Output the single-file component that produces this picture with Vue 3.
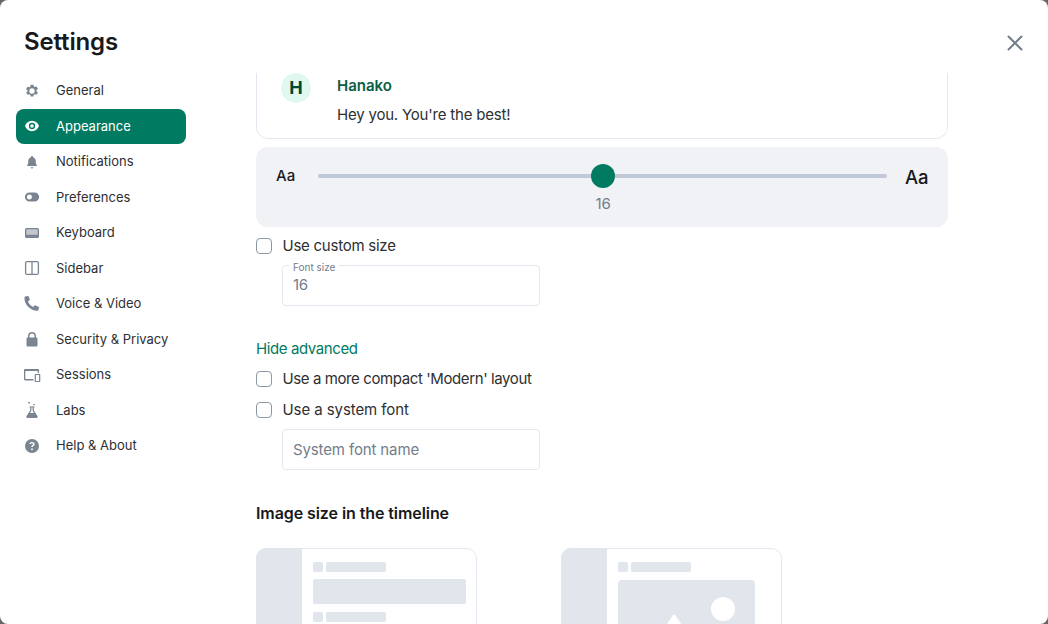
<script setup>
const nav = [
  { label: 'General', icon: 'gear' },
  { label: 'Appearance', icon: 'eye', active: true },
  { label: 'Notifications', icon: 'bell' },
  { label: 'Preferences', icon: 'toggle' },
  { label: 'Keyboard', icon: 'keyboard' },
  { label: 'Sidebar', icon: 'sidebar' },
  { label: 'Voice & Video', icon: 'phone' },
  { label: 'Security & Privacy', icon: 'lock' },
  { label: 'Sessions', icon: 'devices' },
  { label: 'Labs', icon: 'flask' },
  { label: 'Help & About', icon: 'help' },
]
</script>

<template>
  <div class="dialog">
    <header class="head">
      <h1>Settings</h1>
      <svg class="close" width="24" height="24" viewBox="0 0 24 24"><path d="M5.5 5.5l13 13M18.500 5.500l-13 13" fill="none" stroke="currentColor" stroke-width="2" stroke-linecap="round"/></svg>
    </header>
    <div class="body">
      <nav class="nav">
        <div v-for="n in nav" :key="n.label" class="item" :class="{ active: n.active }">
          <svg class="ico" width="18" height="18" viewBox="0 0 18 18" fill="currentColor">
            <template v-if="n.icon === 'gear'">
              <path transform="translate(9 9) scale(.86) translate(-9 -9)" fill-rule="evenodd" d="M7.400 1.600h3.200l.4 2 1.300.75 1.950-.65 1.600 2.750-1.550 1.350v1.500l1.550 1.350-1.600 2.750-1.950-.65-1.300.75-.4 2H7.400l-.4-2-1.300-.75-1.950.65-1.600-2.750 1.550-1.350V8.200L2.150 6.850l1.600-2.750 1.950.65L7 4zM9 5.900a3.100 3.100 0 1 0 0 6.200 3.100 3.100 0 0 0 0-6.200z"/>
            </template>
            <template v-else-if="n.icon === 'eye'">
              <path transform="translate(9 9) scale(.92) translate(-9 -9)" fill-rule="evenodd" d="M9 3.400c3.600 0 6.400 2.400 7.600 5.600-1.200 3.200-4 5.600-7.600 5.600S2.600 12.200 1.400 9C2.600 5.800 5.400 3.400 9 3.400zm0 2.200a3.400 3.400 0 1 0 0 6.800 3.400 3.400 0 0 0 0-6.800zm0 1.500a1.900 1.900 0 1 1 0 3.800 1.900 1.900 0 0 1 0-3.800z"/>
            </template>
            <template v-else-if="n.icon === 'bell'">
              <path transform="translate(9 9) scale(.9) translate(-9 -9)" d="M9 2c.6 0 1 .4 1 1v.6c2 .5 3.200 2.200 3.200 4.300v2.600l1.200 2v.9H3.600v-.9l1.200-2V7.900c0-2.100 1.200-3.800 3.200-4.300V3c0-.6.4-1 1-1zM7.600 14.800h2.800a1.400 1.400 0 0 1-2.800 0z"/>
            </template>
            <template v-else-if="n.icon === 'toggle'">
              <path fill-rule="evenodd" d="M6.500 4.400h5a4.600 4.600 0 0 1 0 9.200h-5a4.600 4.600 0 0 1 0-9.200zm0 2.100a2.500 2.500 0 1 0 0 5 2.500 2.500 0 0 0 0-5z"/>
            </template>
            <template v-else-if="n.icon === 'keyboard'">
              <rect x="2" y="4" width="14" height="10" rx="1.500"/>
              <rect x="3.300" y="5.300" width="11.400" height="5.400" rx=".5" fill="#fff" opacity=".55"/>
            </template>
            <template v-else-if="n.icon === 'sidebar'">
              <rect x="2.600" y="2.600" width="12.800" height="12.800" rx="1.500" fill="none" stroke="currentColor" stroke-width="1.300"/>
              <path d="M9 2.600v12.800" fill="none" stroke="currentColor" stroke-width="1.300"/>
            </template>
            <template v-else-if="n.icon === 'phone'">
              <path transform="translate(-1 0)" d="M3.300 1.500l2.300-.6c.5-.1.9.1 1.100.6l1 2.600c.2.400.1.800-.2 1.100L6 6.500c.8 2.200 2.900 4.500 5.100 5.500l1.400-1.400c.3-.3.700-.4 1.100-.2l2.900 1.300c.4.200.6.600.5 1.100l-.6 2.200c-.1.500-.5.800-1 .8C8.500 15.900 1.900 9.300 2.500 2.500c0-.5.300-.9.800-1z"/>
            </template>
            <template v-else-if="n.icon === 'lock'">
              <path transform="translate(0 .5)" fill-rule="evenodd" d="M9 1.500a4 4 0 0 1 4 4V7h.2c.8 0 1.300.6 1.300 1.300v6.400c0 .8-.6 1.300-1.300 1.300H4.800c-.8 0-1.300-.6-1.300-1.300V8.300C3.500 7.500 4.100 7 4.800 7H5V5.500a4 4 0 0 1 4-4zm0 1.500A2.500 2.500 0 0 0 6.500 5.500V7h5V5.500A2.500 2.500 0 0 0 9 3z"/>
            </template>
            <template v-else-if="n.icon === 'flask'">
              <circle cx="6" cy="1.700" r=".9"/><circle cx="11" cy="3.600" r=".8"/>
              <path fill-rule="evenodd" d="M6.500 5.500h5v1h-.7v3l3.700 5.500c.5.800 0 2-1 2H4.500c-1 0-1.500-1.200-1-2l3.700-5.500v-3h-.7zm1.900 1v3.400L7 12h4L9.600 9.900V6.500z"/>
            </template>
            <template v-else-if="n.icon === 'help'">
              <path transform="translate(9 9) scale(.9) translate(-9 -9)" fill-rule="evenodd" d="M9 1.200a7.800 7.800 0 1 1 0 15.600A7.800 7.800 0 0 1 9 1.200zM9 11.600a1 1 0 1 0 0 2 1 1 0 0 0 0-2zM9 4.500c-1.600 0-2.800 1-2.900 2.300h1.600c.1-.5.600-.9 1.300-.9.700 0 1.200.4 1.200 1 0 .5-.3.800-.9 1.200-.8.500-1.100 1-1.100 1.900v.2h1.600v-.2c0-.5.200-.7.800-1.100.8-.5 1.300-1.100 1.300-2.100 0-1.400-1.200-2.300-2.900-2.300z"/>
            </template>
            <template v-else-if="n.icon === 'devices'">
              <path fill-rule="evenodd" d="M2.200 3h12.600c.7 0 1.200.5 1.200 1.200V7h-1.300V5.600a.8.8 0 0 0-.4-.6H2.800c-.3 0-.5.200-.5.500v6.900c0 .3.200.5.500.5H10.500v1.500H2.200c-.7 0-1.200-.6-1.200-1.300V4.200C1 3.500 1.500 3 2.200 3z"/>
              <path fill-rule="evenodd" d="M12.700 8h3.600c.6 0 1 .4 1 1v6c0 .6-.4 1-1 1h-3.600c-.6 0-1-.4-1-1V9c0-.6.4-1 1-1zm.2 1.100v5.800h3.200V9.100z"/>
            </template>
          </svg>
          <span class="lbl">{{ n.label }}</span>
        </div>
      </nav>

      <main class="content">
        <section class="preview">
          <div class="avatar">H</div>
          <div class="msg">
            <div class="sender">Hanako</div>
            <div class="text">Hey you. You're the best!</div>
          </div>
        </section>

        <section class="slider">
          <span class="aa small">Aa</span>
          <div class="track-wrap">
            <div class="track"><span class="thumb"></span></div>
            <span class="val">16</span>
          </div>
          <span class="aa big">Aa</span>
        </section>

        <label class="check first"><span class="box"></span>Use custom size</label>
        <div class="field">
          <span class="legend">Font size</span>
          <span class="value">16</span>
        </div>

        <a class="toggle-adv">Hide advanced</a>
        <label class="check compact"><span class="box"></span>Use a more compact 'Modern' layout</label>
        <label class="check second"><span class="box"></span>Use a system font</label>
        <div class="field plain"><span class="value">System font name</span></div>

        <h2>Image size in the timeline</h2>
        <div class="tiles">
          <svg class="tile" width="221" height="90" viewBox="0 0 221 90">
            <path d="M10 .5h200.500a10 10 0 0 1 10 10V90H.5V10.500a10 10 0 0 1 9.500-10z" fill="#fff" stroke="#e3e8f0"/>
            <path d="M10 0h36v90H0V10A10 10 0 0 1 10 0z" fill="#e1e5ec"/>
            <rect x="57" y="14" width="10" height="10" rx="2" fill="#e1e5ec"/>
            <rect x="70" y="14" width="60" height="10" rx="2" fill="#e1e5ec"/>
            <rect x="57" y="31" width="153" height="25" rx="2" fill="#e1e5ec"/>
            <rect x="57" y="64" width="10" height="10" rx="2" fill="#e1e5ec"/>
            <rect x="70" y="64" width="60" height="10" rx="2" fill="#e1e5ec"/>
          </svg>
          <svg class="tile" width="221" height="90" viewBox="0 0 221 90">
            <path d="M10 .5h200.500a10 10 0 0 1 10 10V90H.5V10.500a10 10 0 0 1 9.500-10z" fill="#fff" stroke="#e3e8f0"/>
            <path d="M10 0h36v90H0V10A10 10 0 0 1 10 0z" fill="#e1e5ec"/>
            <rect x="57" y="14" width="10" height="10" rx="2" fill="#e1e5ec"/>
            <rect x="70" y="14" width="60" height="10" rx="2" fill="#e1e5ec"/>
            <rect x="57" y="32" width="137" height="58" rx="4" fill="#e1e5ec"/>
            <circle cx="162" cy="61" r="12" fill="#fff"/>
            <path d="M112 67c.6-.8 1.600-.8 2.200 0l6 9h-14.200z" fill="#fff"/>
          </svg>
        </div>
      </main>
    </div>
  </div>
</template>

<style>
html, body { margin: 0; background: #666; overflow: hidden; }
</style>

<style scoped>
.dialog {
  width: 1048px;
  height: 624px;
  background: #fff;
  border-radius: 8px;
  overflow: hidden;
  font-family: Inter, "Liberation Sans", sans-serif;
  color: #17191c;
  display: flex;
  flex-direction: column;
}
.head {
  height: 73px;
  flex: none;
  display: flex;
  justify-content: space-between;
  align-items: flex-start;
  padding: 0 21px 0 24px;
  box-sizing: border-box;
}
h1 {
  margin: 25px 0 0;
  font-size: 24px;
  line-height: 34px;
  font-weight: 600;
  letter-spacing: -.15px;
}
.close { color: #737d8c; margin-top: 31px; }
.body { flex: 1; display: flex; min-height: 0; }
.nav {
  width: 170px;
  margin-left: 16px;
  flex: none;
  display: flex;
  flex-direction: column;
}
.item {
  height: 35.500px;
  display: flex;
  align-items: center;
  padding-left: 7px;
  border-radius: 8px;
  color: #2e2f32;
  font-size: 13px;
}
.item .ico { color: #7b8491; flex: none; }
.lbl { margin-left: 15px; margin-bottom: 1px; }
.item.active { background: #007a61; color: #fff; }
.item.active .ico { color: #fff; }
.content {
  width: 692px;
  margin-left: 70px;
  flex: none;
  overflow: hidden;
  font-size: 15px;
  letter-spacing: -.25px;
  color: #2e2f32;
}
.preview {
  margin-top: -20px;
  height: 86px;
  box-sizing: border-box;
  border: 1px solid #e3e8f0;
  border-radius: 12px;
  padding: 19px 24px 0;
  display: flex;
}
.avatar {
  width: 30px;
  height: 30px;
  border-radius: 50%;
  background: #e0f8f0;
  color: #004933;
  font-size: 18px;
  font-weight: 700;
  line-height: 30px;
  text-align: center;
  flex: none;
  letter-spacing: 0;
}
.msg { margin-left: 26px; }
.sender { color: #0b5d43; font-weight: 600; line-height: 22px; margin-top: 2px; letter-spacing: 0; }
.text { margin-top: 7px; line-height: 22px; letter-spacing: -.2px; }
.slider {
  margin-top: 8px;
  height: 80px;
  box-sizing: border-box;
  background: #f0f2f5;
  border-radius: 12px;
  padding: 0 20px;
  display: flex;
  align-items: flex-start;
}
.aa { font-weight: 500; line-height: 20px; letter-spacing: 0; color: #17191c; }
.small { margin-top: 19px; width: 42px; flex: none; }
.big { font-size: 18.500px; margin-top: 20px; width: 23px; margin-left: 18px; flex: none; }
.track-wrap { flex: 1; position: relative; margin-top: 27px; }
.track { height: 4px; background: #c1c9d6; border-radius: 2px; position: relative; }
.thumb {
  position: absolute;
  left: 273px;
  top: -10px;
  width: 24px;
  height: 24px;
  border-radius: 50%;
  background: #007a61;
}
.val {
  position: absolute;
  left: 263px;
  width: 44px;
  text-align: center;
  top: 20px;
  line-height: 20px;
  color: #737d8c;
}
.check {
  display: flex;
  align-items: center;
  height: 22px;
  margin-top: 9px;
  line-height: 22px;
}
.check.first { margin-top: 8px; }
.check.compact { margin-top: 8px; letter-spacing: -.4px; }
.check.second { letter-spacing: -.08px; }
.box {
  width: 16px;
  height: 16px;
  box-sizing: border-box;
  border: 1px solid #8d97a5;
  border-radius: 4px;
  margin-right: 10.500px;
  flex: none;
}
.field {
  position: relative;
  margin: 8px 0 0 26px;
  width: 258px;
  height: 41px;
  box-sizing: border-box;
  border: 1px solid #e3e8f0;
  border-radius: 4px;
  padding: 0 10px 2px;
  display: flex;
  align-items: center;
}
.field .value { color: #737d8c; }
.field.plain { padding-bottom: 0; letter-spacing: -.13px; }
.legend {
  position: absolute;
  left: 6px;
  top: -5px;
  padding: 0 4px;
  background: #fff;
  font-size: 10px;
  line-height: 12px;
  color: #737d8c;
  letter-spacing: 0;
}
.toggle-adv {
  display: block;
  margin-top: 32px;
  color: #007a61;
  line-height: 22px;
  letter-spacing: -.4px;
}
h2 {
  margin: 32px 0 0;
  font-size: 16px;
  line-height: 22px;
  font-weight: 600;
  letter-spacing: -.08px;
  color: #17191c;
}
.tiles { display: flex; gap: 84px; margin-top: 24px; }
.tile { display: block; flex: none; }
</style>
